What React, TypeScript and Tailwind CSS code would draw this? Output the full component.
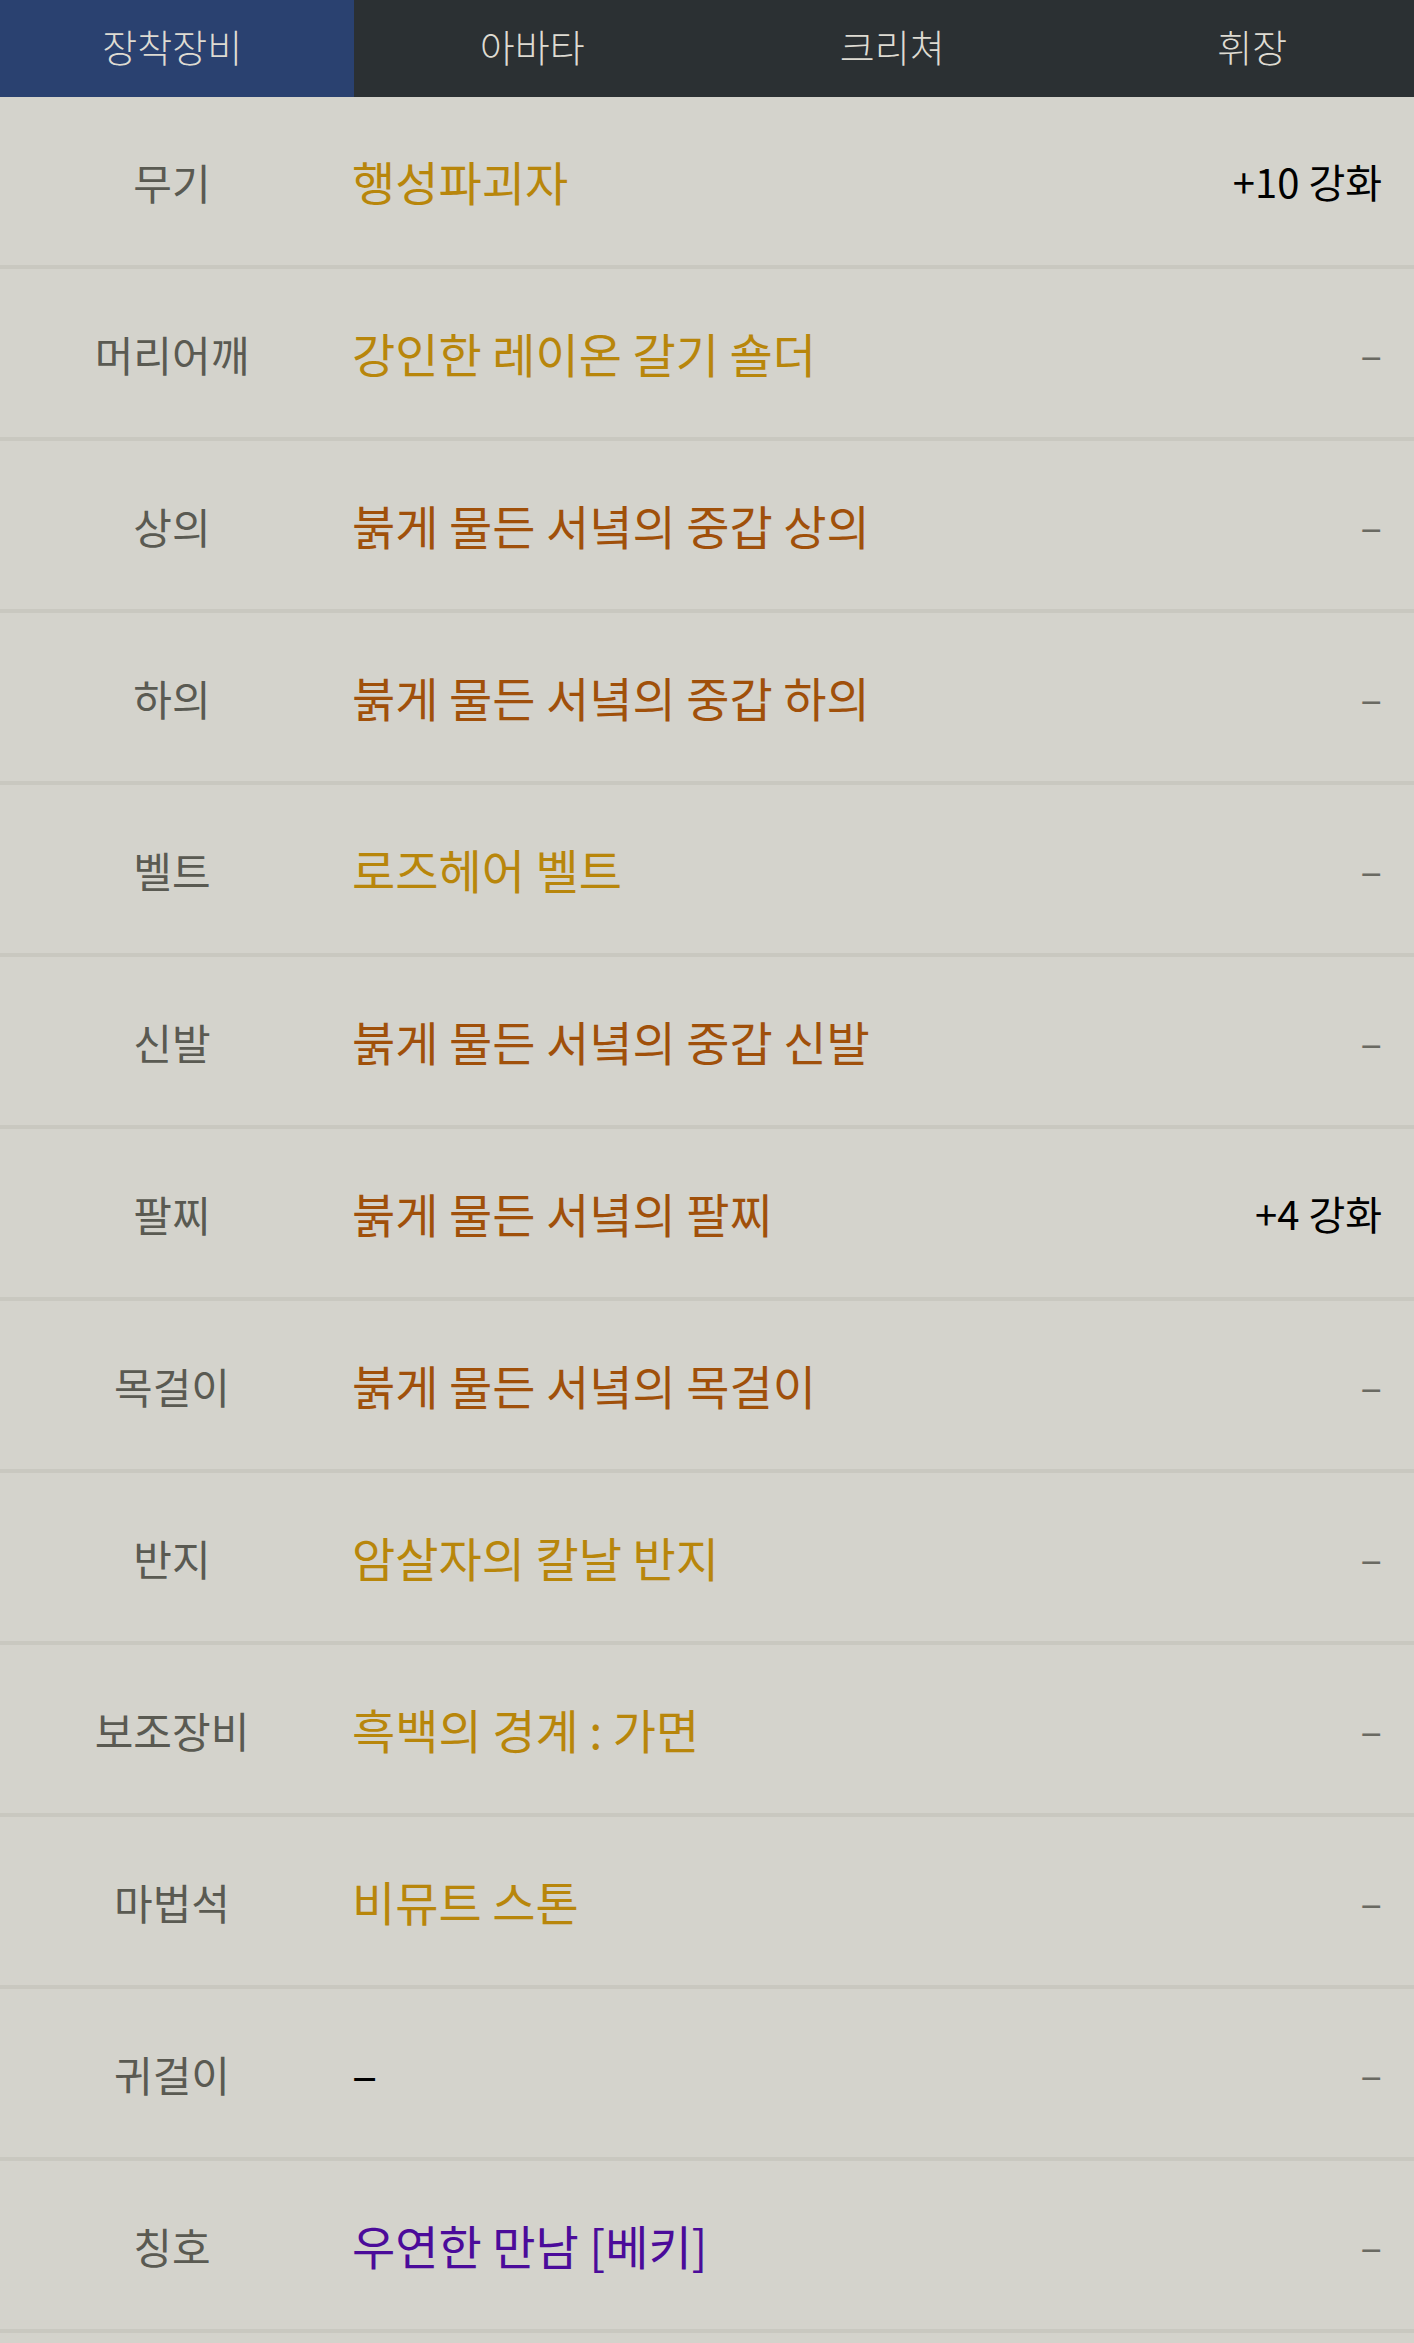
import React, { useState } from 'react';

type Slot = {
  label: string;
  name: string;
  tone: 'gold' | 'brown' | 'purple' | 'none';
  upgrade?: string;
};

const slots: Slot[] = [
  { label: '무기', name: '행성파괴자', tone: 'gold', upgrade: '+10 강화' },
  { label: '머리어깨', name: '강인한 레이온 갈기 숄더', tone: 'gold' },
  { label: '상의', name: '붉게 물든 서녘의 중갑 상의', tone: 'brown' },
  { label: '하의', name: '붉게 물든 서녘의 중갑 하의', tone: 'brown' },
  { label: '벨트', name: '로즈헤어 벨트', tone: 'gold' },
  { label: '신발', name: '붉게 물든 서녘의 중갑 신발', tone: 'brown' },
  { label: '팔찌', name: '붉게 물든 서녘의 팔찌', tone: 'brown', upgrade: '+4 강화' },
  { label: '목걸이', name: '붉게 물든 서녘의 목걸이', tone: 'brown' },
  { label: '반지', name: '암살자의 칼날 반지', tone: 'gold' },
  { label: '보조장비', name: '흑백의 경계 : 가면', tone: 'gold' },
  { label: '마법석', name: '비뮤트 스톤', tone: 'gold' },
  { label: '귀걸이', name: '–', tone: 'none' },
  { label: '칭호', name: '우연한 만남 [베키]', tone: 'purple' },
];

const toneClass = {
  gold: 'text-[#b8860b]',
  brown: 'text-[#a0500a]',
  purple: 'text-[#4b0b9a]',
  none: 'text-black',
};

const tabs = ['장착장비', '아바타', '크리쳐', '휘장'];

export default function App() {
  const [active, setActive] = useState(0);

  return (
    <div className="min-h-[2343px] w-[1414px] bg-[#d4d3cc] font-['Noto_Sans_CJK_KR','Noto_Sans',sans-serif]">
      {/* tab strip: items sit slightly wider than a quarter, last one is clipped */}
      <div className="flex h-[97px] gap-[6.5px] overflow-hidden bg-[#2b3033]">
        {tabs.map((t, i) => (
          <button
            key={t}
            onClick={() => setActive(i)}
            className={`w-[353.5px] shrink-0 pb-[6px] pr-[9px] text-[38px] font-light text-[#dedbd2] ${
              i === active ? 'bg-[#2a4170]' : 'bg-[#2b3033]'
            }`}
          >
            {t}
          </button>
        ))}
      </div>

      <div>
        {slots.map((s) => (
          <div key={s.label} className="flex h-[172px] items-center border-b-4 border-[#c9c8c0]">
            <div className="w-[344px] text-center text-[42px] text-[#5a5a52]">{s.label}</div>
            <div className={`flex-1 pl-[8px] text-[47px] ${toneClass[s.tone]}`}>{s.name}</div>
            <div className={`pr-[32px] text-[40px] ${s.upgrade ? 'text-black' : 'text-[#6a6a62]'}`}>
              {s.upgrade ?? '–'}
            </div>
          </div>
        ))}
      </div>
    </div>
  );
}
